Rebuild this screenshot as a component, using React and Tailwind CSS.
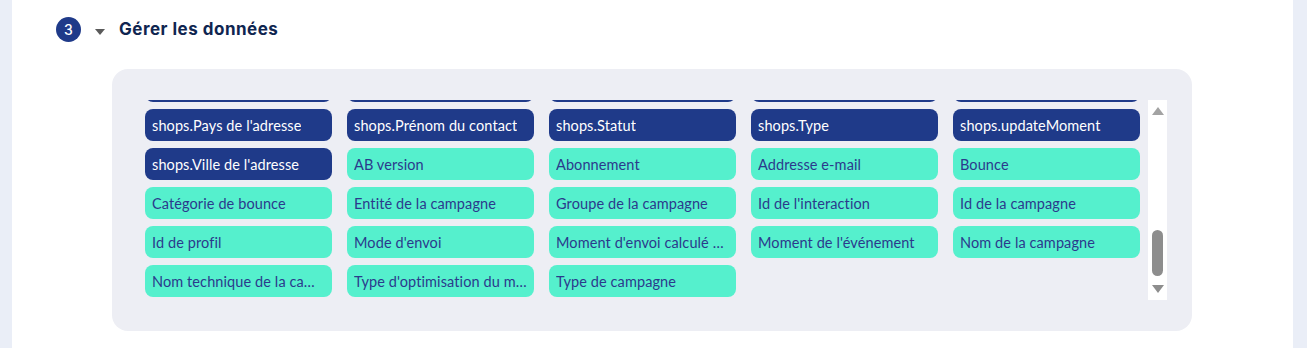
import React from "react";

const hidden = [
  "shops.Nom du contact",
  "shops.Numéro de rue",
  "shops.Pays",
  "shops.Code postal",
  "shops.Nom de famille",
];

const darkItems = [
  "shops.Pays de l'adresse",
  "shops.Prénom du contact",
  "shops.Statut",
  "shops.Type",
  "shops.updateMoment",
  "shops.Ville de l'adresse",
];

const lightItems = [
  "AB version",
  "Abonnement",
  "Addresse e-mail",
  "Bounce",
  "Catégorie de bounce",
  "Entité de la campagne",
  "Groupe de la campagne",
  "Id de l'interaction",
  "Id de la campagne",
  "Id de profil",
  "Mode d'envoi",
  "Moment d'envoi calculé par l'algorithme",
  "Moment de l'événement",
  "Nom de la campagne",
  "Nom technique de la campagne",
  "Type d'optimisation du moment",
  "Type de campagne",
];

function Chip({ label, dark }) {
  return (
    <div
      className={
        "h-[32px] rounded-[8px] px-[7px] pt-[2px] flex items-center text-[14.5px] tracking-[0.1px] " +
        (dark ? "bg-[#1f3a89] text-white" : "bg-[#55f0cd] text-[#2b3a8c]")
      }
    >
      <span className="truncate">{label}</span>
    </div>
  );
}

export default function App() {
  return (
    <div className="w-[1307px] h-[348px] bg-[#eaeef7] flex overflow-hidden" style={{ fontFamily: "Lato, 'Noto Sans', sans-serif" }}>
      <div className="ml-[12px] w-[1281px] h-full bg-white pl-[44px] pt-[17px]">
        <div className="flex items-center h-[25px]">
          <div className="w-[25px] h-[25px] rounded-full bg-[#1f3a89] text-white flex items-center justify-center text-[14px] font-medium" style={{ fontFamily: "Inter, sans-serif" }}>
            3
          </div>
          <svg className="ml-[14px] mt-[4px]" width="10" height="6" viewBox="0 0 10 6">
            <path d="M0 0 L10 0 L5 6 Z" fill="#5a5a5a" />
          </svg>
          <div className="ml-[14px] text-[17px] font-bold text-[#0f2550] tracking-[0.5px]" style={{ fontFamily: "Inter, sans-serif" }}>
            Gérer les données
          </div>
        </div>
        <div className="ml-[56px] mt-[27px] w-[1080px] h-[262px] bg-[#edeef4] rounded-[16px] pl-[33px] pr-[25px] pt-[31px]">
          <div className="flex h-[200px] gap-[8px]">
            <div className="flex-1 overflow-hidden">
              <div className="grid grid-cols-5 gap-x-[15px] gap-y-[7px] -mt-[30px]">
                {hidden.map((h) => (
                  <Chip key={h} label={h} dark />
                ))}
                {darkItems.map((d) => (
                  <Chip key={d} label={d} dark />
                ))}
                {lightItems.map((l) => (
                  <Chip key={l} label={l} />
                ))}
              </div>
            </div>
            <div className="w-[19px] h-full bg-white flex flex-col items-center justify-between pt-[7px] pb-[7px]">
              <svg width="12" height="8" viewBox="0 0 12 8">
                <path d="M0 8 L12 8 L6 0 Z" fill="#a3a3a3" />
              </svg>
              <div className="flex-1 w-full relative">
                <div className="absolute left-[4px] w-[11px] top-[115px] h-[46px] rounded-full bg-[#8d8d8d]" />
              </div>
              <svg width="12" height="8" viewBox="0 0 12 8">
                <path d="M0 0 L12 0 L6 8 Z" fill="#8d8d8d" />
              </svg>
            </div>
          </div>
        </div>
      </div>
    </div>
  );
}
